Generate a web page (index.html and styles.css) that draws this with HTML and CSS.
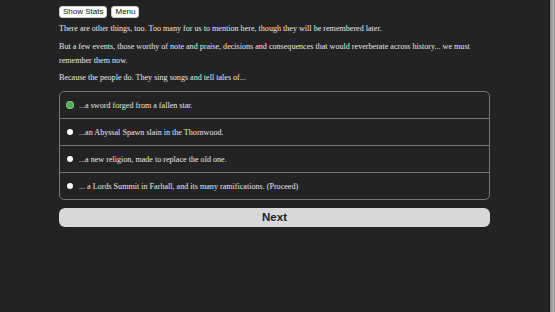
FILE: index.html
```html
<!DOCTYPE html>
<html lang="en">
<head>
    <meta charset="UTF-8">
    <meta name="viewport" content="width=device-width, initial-scale=1.0">
    <title>Story</title>
    <link rel="stylesheet" href="styles.css">
</head>
<body>
    <div class="page">
        <div class="content">
            <div class="topbar">
                <div class="small-button">Show Stats</div>
                <div class="small-button">Menu</div>
            </div>
            <p>There are other things, too. Too many for us to mention here, though they will be remembered later.</p>
            <p>But a few events, those worthy of note and praise, decisions and consequences that would reverberate across history... we must remember them now.</p>
            <p class="last">Because the people do. They sing songs and tell tales of...</p>

            <div class="choices">
                <div class="choice">
                    <span class="radio selected"></span>
                    <span>...a sword forged from a fallen star.</span>
                </div>
                <div class="choice">
                    <span class="radio"></span>
                    <span>...an Abyssal Spawn slain in the Thornwood.</span>
                </div>
                <div class="choice">
                    <span class="radio"></span>
                    <span>...a new religion, made to replace the old one.</span>
                </div>
                <div class="choice">
                    <span class="radio"></span>
                    <span>... a Lords Summit in Farhall, and its many ramifications. (Proceed)</span>
                </div>
            </div>

            <div class="next-button">Next</div>
        </div>
    </div>
    <div class="scrollbar"></div>
</body>
</html>
```

FILE: styles.css
```css
html, body {
    height: 100%;
}

body {
    margin: 0;
    display: flex;
    background-color: #232323;
    color: #e8e8e8;
    font-family: "Liberation Serif", serif;
    overflow: hidden;
}

.page {
    flex: 1;
}

.content {
    width: 431px;
    margin: 0 auto;
    padding-top: 6px;
}

.topbar {
    display: flex;
    gap: 4px;
}

.small-button {
    background-color: #fff;
    color: #111;
    font-family: "Liberation Sans", Arial, sans-serif;
    font-size: 8px;
    height: 12px;
    line-height: 10px;
    padding: 0 3px;
    border-radius: 3px;
    box-sizing: border-box;
    border: 1px solid #ccc;
}

p {
    font-size: 8.1px;
    line-height: 14px;
    margin: 4px 0 0;
}

p.last {
    margin-top: 3px;
    margin-bottom: 6px;
}

.choices {
    border: 1px solid #777;
    border-radius: 5px;
}

.choice {
    display: flex;
    align-items: center;
    gap: 6px;
    height: 26px;
    padding-left: 7px;
    font-size: 8.1px;
    border-top: 1px solid #777;
}

.choice:first-child {
    border-top: none;
}

.radio {
    width: 6px;
    height: 6px;
    border-radius: 50%;
    background-color: #fff;
}

.radio.selected {
    background-color: #4caf50;
    box-shadow: 0 0 0 1px #8bc98e;
}

.next-button {
    margin-top: 8px;
    height: 19px;
    line-height: 19px;
    background-color: #d8d8d8;
    color: #222;
    border-radius: 6px;
    text-align: center;
    font-family: "Liberation Sans", Arial, sans-serif;
    font-weight: bold;
    font-size: 11.5px;
}

.scrollbar {
    width: 5px;
    border-left: 1px solid #151515;
    background: linear-gradient(to right, #8a8a8a, #b0b0b0 70%, #8c8c8c);
}
```
